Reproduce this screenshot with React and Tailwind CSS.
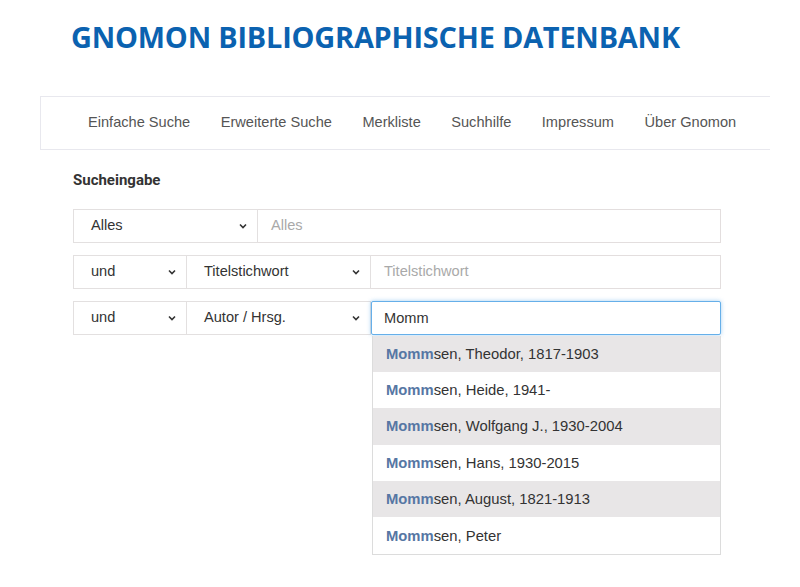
import React, { useState } from 'react';

const navItems = ['Einfache Suche', 'Erweiterte Suche', 'Merkliste', 'Suchhilfe', 'Impressum', 'Über Gnomon'];

const suggestions = [
  'sen, Theodor, 1817-1903',
  'sen, Heide, 1941-',
  'sen, Wolfgang J., 1930-2004',
  'sen, Hans, 1930-2015',
  'sen, August, 1821-1913',
  'sen, Peter',
];

const Chevron = () => (
  <svg className="w-[10px] h-[10px] text-[#333]" viewBox="0 0 10 10" fill="none" stroke="currentColor" strokeWidth="1.6">
    <path d="M2 3.5 L5 6.5 L8 3.5" />
  </svg>
);

const Select = ({ value, className = '' }) => (
  <div className={`h-[34px] border border-[#e3e0e0] bg-white flex items-center justify-between pl-[17px] pr-[9px] text-[14.6px] text-[#333] ${className}`}>
    <span>{value}</span>
    <Chevron />
  </div>
);

const App = () => {
  const [query, setQuery] = useState('Momm');

  return (
    <div className="w-[800px] h-[587px] bg-white overflow-hidden font-['Liberation_Sans']">
      <h1 className="pt-[18px] pl-[71px] text-[28.9px] leading-[38px] font-bold text-[#0b62b0] font-['Open_Sans'] tracking-[-0.2px]">
        GNOMON BIBLIOGRAPHISCHE DATENBANK
      </h1>

      <nav className="mt-[40px] ml-[40px] w-[730px] h-[54px] border border-r-0 border-[#e8e8ee] flex items-center pl-[47px] gap-[30.5px] text-[14.6px] text-[#555] font-['Liberation_Sans']">
        {navItems.map((item) => (
          <span key={item}>{item}</span>
        ))}
      </nav>

      <div className="pl-[73px]">
        <h2 className="mt-[19px] text-[15px] font-bold text-[#333] font-['Roboto']">Sucheingabe</h2>

        <div className="mt-[17px] flex flex-col gap-[12px] w-[648px]">
          <div className="flex">
            <Select value="Alles" className="w-[185px]" />
            <div className="flex-1 h-[34px] border border-l-0 border-[#e3dede] flex items-center pl-[13px] text-[14.6px] text-[#a9a9a9]">
              Alles
            </div>
          </div>

          <div className="flex">
            <Select value="und" className="w-[114px]" />
            <Select value="Titelstichwort" className="w-[184px] border-l-0" />
            <div className="flex-1 h-[34px] border border-l-0 border-[#e3dede] flex items-center pl-[13px] text-[14.6px] text-[#a9a9a9]">
              Titelstichwort
            </div>
          </div>

          <div className="flex">
            <Select value="und" className="w-[114px]" />
            <Select value="Autor / Hrsg." className="w-[184px] border-l-0" />
            <div className="flex-1 relative">
              <input
                autoFocus
                value={query}
                onChange={(e) => setQuery(e.target.value)}
                className="w-full h-[34px] border border-[#66afe9] rounded-[2px] shadow-[0_0_4px_rgba(102,175,233,0.6)] outline-none pl-[12px] text-[14.6px] text-[#333] bg-white caret-[#333] font-['Liberation_Sans']"
              />
              <ul className="absolute left-[1px] right-0 top-[35px] border border-t-0 border-[#dcdcdc] bg-white">
                {suggestions.map((s, i) => (
                  <li
                    key={s}
                    className={`h-[36.4px] flex items-center pl-[13px] text-[14.8px] text-[#333] ${i % 2 === 0 ? 'bg-[#e8e6e7]' : 'bg-white'}`}
                  >
                    <span className="font-bold text-[#5677a4]">Momm</span>
                    <span>{s}</span>
                  </li>
                ))}
              </ul>
            </div>
          </div>
        </div>
      </div>
    </div>
  );
};

export default App;
